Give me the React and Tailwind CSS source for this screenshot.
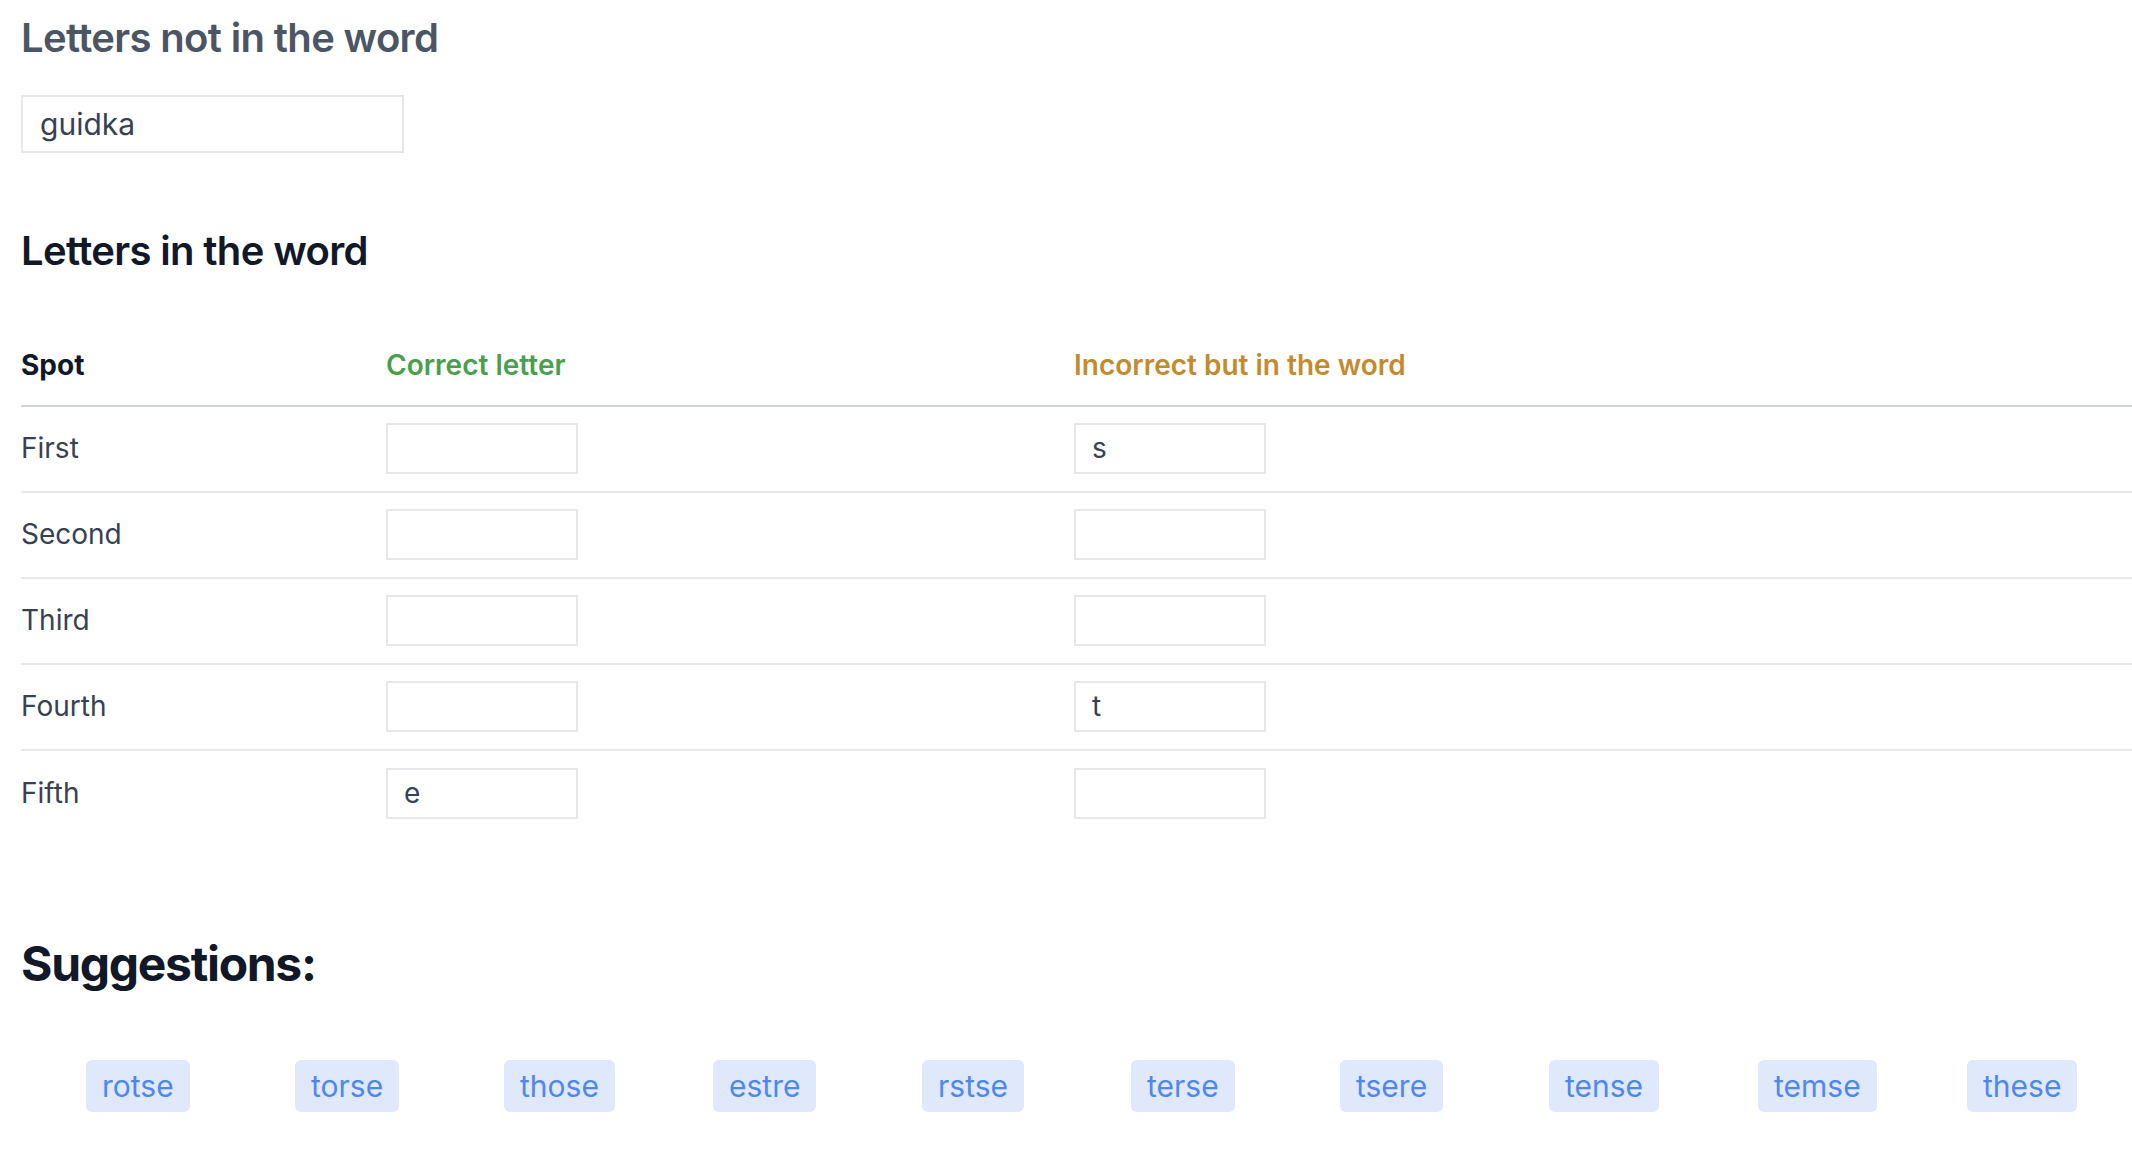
import { useState } from 'react';

const SPOTS = ['First', 'Second', 'Third', 'Fourth', 'Fifth'];

const SUGGESTIONS = ['rotse', 'torse', 'those', 'estre', 'rstse', 'terse', 'tsere', 'tense', 'temse', 'these'];

const LetterInput = ({ value, onChange }) => (
  <input
    type="text"
    value={value}
    onChange={(e) => onChange(e.target.value)}
    className="w-[192px] h-[51px] border-2 border-[#e5e7eb] bg-white px-[16px] text-[28px] text-[#374151] outline-none"
  />
);

const App = () => {
  const [excluded, setExcluded] = useState('guidka');
  const [correct, setCorrect] = useState(['', '', '', '', 'e']);
  const [misplaced, setMisplaced] = useState(['s', '', '', 't', '']);

  const update = (list, setList, i, v) => {
    const next = [...list];
    next[i] = v;
    setList(next);
  };

  return (
    <div className="min-h-screen bg-white pl-[21px] pt-[14px] font-['Inter','Noto_Sans',sans-serif] text-[#374151]">
      {/* Letters not in the word */}
      <h2 className="text-[40px] leading-[48px] font-semibold text-[#4b5563] tracking-[-0.65px]">Letters not in the word</h2>
      <input
        type="text"
        value={excluded}
        onChange={(e) => setExcluded(e.target.value)}
        className="mt-[33px] block w-[383px] h-[58px] border-2 border-[#e5e7eb] px-[17px] text-[30px] text-[#374151] outline-none"
      />

      {/* Letters in the word */}
      <h2 className="mt-[74px] text-[40px] leading-[48px] font-semibold text-[#111827] tracking-[-0.65px]">Letters in the word</h2>

      <div className="mt-[50px] text-[28px] leading-[42px]">
        <div className="grid grid-cols-[365px_688px_1fr] border-b-2 border-[#d1d5db] pt-[19px] pb-[19px] font-semibold">
          <div className="text-[#111827] font-bold">Spot</div>
          <div className="text-[#4a9f4f]">Correct letter</div>
          <div className="text-[#c38b2f]">Incorrect but in the word</div>
        </div>
        {SPOTS.map((spot, i) => (
          <div
            key={spot}
            className={`grid grid-cols-[365px_688px_1fr] items-center h-[86px] pb-[2px] ${i < SPOTS.length - 1 ? 'border-b-2 border-[#e5e7eb]' : ''}`}
          >
            <div className="text-[#374151]">{spot}</div>
            <div>
              <LetterInput value={correct[i]} onChange={(v) => update(correct, setCorrect, i, v)} />
            </div>
            <div>
              <LetterInput value={misplaced[i]} onChange={(v) => update(misplaced, setMisplaced, i, v)} />
            </div>
          </div>
        ))}
      </div>

      {/* Suggestions */}
      <h2 className="mt-[98px] text-[48px] leading-[58px] font-bold text-[#111827] tracking-[-1.3px]">Suggestions:</h2>
      <div className="mt-[67px] grid grid-cols-10 w-[2090px]">
        {SUGGESTIONS.map((word) => (
          <div key={word} className="pl-[65px]">
            <span className="inline-block whitespace-nowrap rounded-[6px] bg-[#dfe9fb] px-[16px] py-[8px] text-[30px] leading-[36px] text-[#4f87ef]">
              {word}
            </span>
          </div>
        ))}
      </div>
    </div>
  );
};

export default App;
